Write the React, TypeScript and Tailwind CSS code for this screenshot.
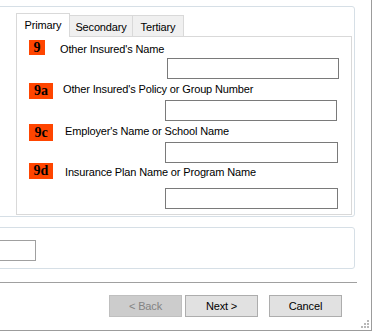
import React from 'react'

type Field = {
  code: string
  label: string
  badgeW: string
  badgeH: string
  rowMt: string
  labelMl: string
  labelMt: string
  inputMt: string
  inputW: string
  inputPr: string
}

const fields: Field[] = [
  { code: '9', label: "Other Insured's Name", badgeW: 'w-[16px]', badgeH: 'h-[15px]', rowMt: 'mt-[3px]', labelMl: 'ml-[15px]', labelMt: 'mt-[2px]', inputMt: 'mt-[3px]', inputW: 'w-[172px]', inputPr: 'pr-[12px]' },
  { code: '9a', label: "Other Insured's Policy or Group Number", badgeW: 'w-[24px]', badgeH: 'h-[16px]', rowMt: 'mt-[4px]', labelMl: 'ml-[10px]', labelMt: '-mt-[1px]', inputMt: 'mt-[1px]', inputW: 'w-[172px]', inputPr: 'pr-[14px]' },
  { code: '9c', label: "Employer's Name or School Name", badgeW: 'w-[24px]', badgeH: 'h-[17px]', rowMt: 'mt-[3px]', labelMl: 'ml-[12px]', labelMt: 'mt-0', inputMt: 'mt-[1px]', inputW: 'w-[173px]', inputPr: 'pr-[13px]' },
  { code: '9d', label: 'Insurance Plan Name or Program Name', badgeW: 'w-[24px]', badgeH: 'h-[16px]', rowMt: 'mt-0', labelMl: 'ml-[12px]', labelMt: 'mt-[2px]', inputMt: 'mt-[9px]', inputW: 'w-[173px]', inputPr: 'pr-[13px]' },
]

function Tab({ label, active }: { label: string; active?: boolean }) {
  if (active) {
    return (
      <div className="relative z-10 -mb-px h-[24px] w-[54px] border border-b-0 border-[#d9d9d9] bg-white flex items-start justify-center pt-[4px] leading-[14px] text-black">
        {label}
      </div>
    )
  }
  return (
    <div className="h-[21px] -ml-px first:ml-0 border border-b-0 border-[#d9d9d9] bg-[#f0f0f0] flex items-start justify-center pt-[4px] leading-[14px] text-black px-[7px]">
      {label}
    </div>
  )
}

export default function App() {
  return (
    <div
      className="relative w-[372px] h-[331px] overflow-hidden bg-white border-r border-b border-[#9c9c9c] text-[11px] tracking-[-0.15px] text-black"
      style={{ fontFamily: '"Liberation Sans", Arial, sans-serif' }}
    >
      {/* Group box with tabs */}
      <div className="mt-[6px] -ml-[10px] w-[365px] h-[211px] border border-[#d6dfe6] rounded-[3px] pl-[25px] pt-[6px]">
        <div className="flex items-end h-[23px]">
          <Tab label="Primary" active />
          <div className="flex items-end -ml-px">
            <div className="h-[21px] w-[64px] border border-b-0 border-[#d9d9d9] bg-[#f0f0f0] flex items-start justify-center pt-[4px] leading-[14px]">Secondary</div>
            <div className="h-[21px] w-[52px] -ml-px border border-b-0 border-[#d9d9d9] bg-[#f0f0f0] flex items-start justify-center pt-[4px] leading-[14px]">Tertiary</div>
          </div>
        </div>
        <div className="w-[336px] h-[179px] border border-[#d9d9d9] bg-white">
          {fields.map((f) => (
            <div key={f.code}>
              <div className={`flex items-start ${f.rowMt} ml-[12px] ${f.badgeH}`}>
                <div
                  className={`${f.badgeW} ${f.badgeH} bg-[#ff4500] flex items-center justify-center font-bold text-[14px] leading-none tracking-normal`}
                  style={{ fontFamily: '"Liberation Serif", "Times New Roman", serif' }}
                >
                  {f.code}
                </div>
                <div className={`${f.labelMl} ${f.labelMt} leading-[14px] whitespace-nowrap`}>{f.label}</div>
              </div>
              <div className={`flex justify-end ${f.inputPr} ${f.inputMt}`}>
                <div className={`${f.inputW} h-[21px] border border-[#7a7a7a] bg-white`} />
              </div>
            </div>
          ))}
        </div>
      </div>

      {/* Second group box */}
      <div className="mt-[10px] -ml-[10px] w-[365px] h-[42px] border border-[#d6dfe6] rounded-[3px] pt-[12px]">
        <div className="w-[45px] h-[21px] border border-[#a0a0a0] bg-white" />
      </div>

      {/* Separator */}
      <div className="mt-[13px] w-[357px] h-px bg-[#a0a0a0]" />

      {/* Wizard buttons */}
      <div className="mt-[12px] flex pl-[109px]">
        <div className="w-[73px] h-[22px] border border-[#bfbfbf] bg-[#cccccc] text-[#838383] flex items-center justify-center">&lt; Back</div>
        <div className="ml-[3px] w-[73px] h-[22px] border border-[#adadad] bg-[#e1e1e1] flex items-center justify-center">Next &gt;</div>
        <div className="ml-[11px] w-[73px] h-[22px] border border-[#adadad] bg-[#e1e1e1] flex items-center justify-center">Cancel</div>
      </div>

      {/* Size grip */}
      <svg className="absolute right-[1px] bottom-[1px]" width="10" height="10" viewBox="0 0 10 10">
        <g fill="#b8b8b8">
          <rect x="7" y="1" width="2" height="2" />
          <rect x="4" y="4" width="2" height="2" />
          <rect x="7" y="4" width="2" height="2" />
          <rect x="1" y="7" width="2" height="2" />
          <rect x="4" y="7" width="2" height="2" />
          <rect x="7" y="7" width="2" height="2" />
        </g>
      </svg>
    </div>
  )
}
